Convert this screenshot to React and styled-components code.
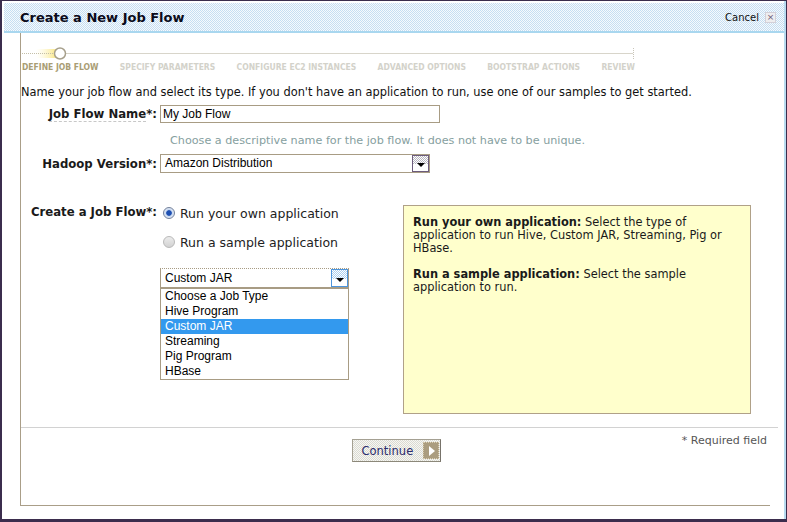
import React from "react";
import styled, { createGlobalStyle } from "styled-components";

const GlobalStyle = createGlobalStyle`
  html, body { margin: 0; padding: 0; background: #fff; }
  body { font-family: "DejaVu Sans", Verdana, sans-serif; font-size: 11px; color: #111; }
  * { box-sizing: border-box; }
`;

const dither = (a, b) => `repeating-conic-gradient(${a} 0 25%, ${b} 0 50%) 0 0 / 2px 2px`;

const Frame = styled.div`
  width: 787px;
  height: 522px;
  border-style: solid;
  border-color: #3b2d4d;
  border-width: 1px 1px 3px 2px;
  background: #fff;
`;

const Window = styled.div`
  height: 100%;
  border-right: 2px solid #b9dcf0;
  display: flex;
  flex-direction: column;
`;

const Header = styled.header`
  margin: 2px 0 0 2px;
  height: 30px;
  flex: none;
  border-bottom: 2px solid #a9d7ef;
  background: ${dither("#c6def2", "#f6fafd")};
  display: flex;
  align-items: center;
  justify-content: space-between;
  padding: 0 8px 0 16px;
`;

const Title = styled.h1`
  margin: 0;
  font-size: 13px;
  font-weight: bold;
  color: #0b0b1a;
`;

const CancelWrap = styled.div`
  display: flex;
  align-items: center;
  gap: 6px;
  font-size: 10px;
  color: #111;
`;

const CloseBox = styled.span`
  width: 11px;
  height: 11px;
  border: 1px solid #d4d0d8;
  background: #eeeef0;
  color: #6c5c78;
  font-size: 9px;
  line-height: 9px;
  text-align: center;
  font-family: "DejaVu Sans", sans-serif;
`;

const Panel = styled.main`
  margin-left: 18px;
  width: 750px;
  height: 473px;
  flex: none;
  border-left: 1px solid #aa9e88;
  border-bottom: 1px solid #aa9e88;
  display: flex;
  flex-direction: column;
`;

const Stepper = styled.div`
  margin: 14px 0 0 1px;
  width: 613px;
`;

const Track = styled.svg`
  display: block;
`;

const StepLabels = styled.div`
  margin-top: 2px;
  display: flex;
  justify-content: space-between;
`;

const StepLabel = styled.span`
  font-family: "DejaVu Sans Condensed", "DejaVu Sans", sans-serif;
  font-stretch: condensed;
  font-size: 8.5px;
  line-height: 11px;
  font-weight: bold;
  color: ${(p) => (p.$active ? "#a99d74" : "#d3d2ca")};
`;

const Intro = styled.p`
  margin: 12px 0 0;
  line-height: 14px;
  font-size: 11.4px;
  color: #111;
`;

const Row = styled.div`
  display: flex;
  align-items: ${(p) => p.$align || "center"};
  gap: 3px;
  margin-top: ${(p) => p.$mt}px;
`;

const Label = styled.div`
  width: 136px;
  flex: none;
  text-align: right;
  font-weight: bold;
  font-size: 11.7px;
  line-height: 14px;
  color: #1a1a1a;
`;

const Dotted = styled.span`
  border-bottom: 1px dashed #c8c8c8;
`;

const TextInput = styled.div`
  width: 280px;
  height: 18px;
  border: 1px solid #a89c84;
  padding: 0 2px;
  font-family: "Liberation Sans", Arial, sans-serif;
  font-size: 12px;
  line-height: 16px;
  color: #000;
`;

const Hint = styled.div`
  margin: 12px 0 0 149px;
  font-size: 11.2px;
  line-height: 12px;
  color: #86a0a0;
`;

const SelectBox = styled.div`
  width: ${(p) => p.$w}px;
  height: ${(p) => p.$h}px;
  border: 1px solid #a89c84;
  border-top-style: ${(p) => (p.$open ? "dotted" : "solid")};
  display: flex;
  align-items: stretch;
  background: #fff;
`;

const SelectText = styled.span`
  flex: 1;
  padding-left: 4px;
  font-family: "Liberation Sans", Arial, sans-serif;
  font-size: 12px;
  line-height: ${(p) => p.$lh}px;
  color: #000;
`;

const ArrowBtn = styled.span`
  width: 17px;
  flex: none;
  border: 1px solid ${(p) => (p.$focus ? "#4d95dc" : "#6c5c7c")};
  background: linear-gradient(to bottom, transparent 0 55%, #fff 55%),
    ${(p) => (p.$focus ? dither("#a9cff0", "#ffffff") : dither("#b8b6c0", "#ffffff"))};
  display: flex;
  align-items: flex-end;
  justify-content: center;
  padding-bottom: 4px;
  &::after {
    content: "";
    border-left: 4px solid transparent;
    border-right: 4px solid transparent;
    border-top: 4px solid #000;
  }
`;

const Controls = styled.div`
  width: 240px;
  flex: none;
  display: flex;
  flex-direction: column;
`;

const RadioRow = styled.label`
  display: flex;
  align-items: center;
  gap: 5px;
  height: 16px;
  margin: ${(p) => p.$mt}px 0 0 3px;
  font-size: 12.5px;
  color: #222;
`;

const Radio = styled.span`
  width: 12px;
  height: 12px;
  flex: none;
  border-radius: 50%;
  border: 1px solid ${(p) => (p.$checked ? "#72809a" : "#b9b9b9")};
  background: ${(p) =>
    p.$checked
      ? "radial-gradient(circle, #1d4fb2 0 2.4px, #c8d8f0 3.2px, #f4f7fc 100%)"
      : "linear-gradient(#ececec, #d2d2d2)"};
`;

const JobType = styled.div`
  margin-top: 18px;
  width: 189px;
`;

const List = styled.ul`
  margin: 0;
  padding: 0;
  list-style: none;
  border: 1px solid #a89c84;
  background: #fff;
`;

const Item = styled.li`
  height: 15px;
  line-height: 15px;
  padding-left: 4px;
  font-family: "Liberation Sans", Arial, sans-serif;
  font-size: 12px;
  color: ${(p) => (p.$selected ? "#fff" : "#000")};
  background: ${(p) => (p.$selected ? "#3399ee" : "transparent")};
`;

const InfoBox = styled.aside`
  width: 348px;
  height: 209px;
  flex: none;
  background: #ffffcc;
  border: 1px solid #b0a188;
  padding: 10px 9px;
  font-size: 11.4px;
  line-height: 13px;
  color: #1a1a1a;
`;

const InfoPara = styled.p`
  margin: 0 0 13px;
`;

const Divider = styled.hr`
  margin: 13px -8px 0 0;
  border: none;
  border-top: 1px solid #d2d2d2;
  height: 0;
`;

const Footer = styled.div`
  margin-top: 11px;
  display: grid;
  grid-template-columns: 1fr auto 1fr;
  align-items: start;
  padding-right: 3px;
`;

const Required = styled.span`
  grid-column: 3;
  justify-self: end;
  margin-top: -5px;
  font-size: 11px;
  color: #555;
`;

const Button = styled.button`
  grid-column: 2;
  margin-left: 4px;
  width: 89px;
  height: 23px;
  display: flex;
  align-items: center;
  padding: 0 1px 0 9px;
  border: 1px solid #a4a092;
  border-right-color: #77736a;
  border-bottom-color: #8c887a;
  background: ${dither("#dadad2", "#f7f7f3")};
  font-family: "DejaVu Sans", Verdana, sans-serif;
  font-size: 11.5px;
  color: #2c2c6c;
  cursor: pointer;
`;

const ButtonArrow = styled.span`
  margin-left: auto;
  width: 16px;
  height: 17px;
  background: #ab9d7f;
  border: 1px dotted #d8ccb0;
  display: flex;
  align-items: center;
  justify-content: center;
  &::after {
    content: "";
    border-left: 6px solid #fff;
    border-top: 5px solid transparent;
    border-bottom: 5px solid transparent;
    margin-left: 2px;
  }
`;

const steps = [
  "DEFINE JOB FLOW",
  "SPECIFY PARAMETERS",
  "CONFIGURE EC2 INSTANCES",
  "ADVANCED OPTIONS",
  "BOOTSTRAP ACTIONS",
  "REVIEW",
];

const jobTypes = ["Choose a Job Type", "Hive Program", "Custom JAR", "Streaming", "Pig Program", "HBase"];

export default function App() {
  return (
    <>
      <GlobalStyle />
      <Frame>
        <Window>
          <Header>
            <Title>Create a New Job Flow</Title>
            <CancelWrap>
              Cancel
              <CloseBox>×</CloseBox>
            </CancelWrap>
          </Header>
          <Panel>
            <Stepper>
              <Track width="613" height="13" viewBox="0 0 613 13">
                <defs>
                  <linearGradient id="glow" x1="0" x2="1" y1="0" y2="0">
                    <stop offset="0" stopColor="#fff6c0" stopOpacity="0" />
                    <stop offset="1" stopColor="#f8e47c" stopOpacity="0.9" />
                  </linearGradient>
                </defs>
                <rect x="14" y="2" width="20" height="9" fill="url(#glow)" />
                <line x1="0" y1="6.5" x2="32" y2="6.5" stroke="#c4bfa8" strokeDasharray="1 1" />
                <line x1="44" y1="6.5" x2="611" y2="6.5" stroke="#d8d5ca" />
                <line x1="611.5" y1="1" x2="611.5" y2="12" stroke="#c8c4b8" strokeDasharray="1 1" />
                <circle cx="38" cy="6.5" r="5.5" fill="#fff" stroke="#a7a08c" strokeWidth="1.5" />
              </Track>
              <StepLabels>
                {steps.map((s, i) => (
                  <StepLabel key={s} $active={i === 0}>
                    {s}
                  </StepLabel>
                ))}
              </StepLabels>
            </Stepper>

            <Intro>
              Name your job flow and select its type. If you don't have an application to run, use one of our
              samples to get started.
            </Intro>

            <Row $mt={6}>
              <Label>
                <Dotted>Job Flow Name</Dotted>*:
              </Label>
              <TextInput>My Job Flow</TextInput>
            </Row>

            <Hint>Choose a descriptive name for the job flow. It does not have to be unique.</Hint>

            <Row $mt={7}>
              <Label>Hadoop Version*:</Label>
              <SelectBox $w={270} $h={19}>
                <SelectText $lh={17}>Amazon Distribution</SelectText>
                <ArrowBtn />
              </SelectBox>
            </Row>

            <Row $mt={32} $align="flex-start">
              <Label>Create a Job Flow*:</Label>
              <Controls>
                <RadioRow $mt={0}>
                  <Radio $checked />
                  Run your own application
                </RadioRow>
                <RadioRow $mt={13}>
                  <Radio />
                  Run a sample application
                </RadioRow>
                <JobType>
                  <SelectBox $w={189} $h={20} $open>
                    <SelectText $lh={18}>Custom JAR</SelectText>
                    <ArrowBtn $focus />
                  </SelectBox>
                  <List>
                    {jobTypes.map((t) => (
                      <Item key={t} $selected={t === "Custom JAR"}>
                        {t}
                      </Item>
                    ))}
                  </List>
                </JobType>
              </Controls>
              <InfoBox>
                <InfoPara>
                  <b>Run your own application:</b> Select the type of application to run Hive, Custom JAR,
                  Streaming, Pig or HBase.
                </InfoPara>
                <InfoPara>
                  <b>Run a sample application:</b> Select the sample application to run.
                </InfoPara>
              </InfoBox>
            </Row>

            <Divider />

            <Footer>
              <Button type="button">
                Continue
                <ButtonArrow />
              </Button>
              <Required>* Required field</Required>
            </Footer>
          </Panel>
        </Window>
      </Frame>
    </>
  );
}
